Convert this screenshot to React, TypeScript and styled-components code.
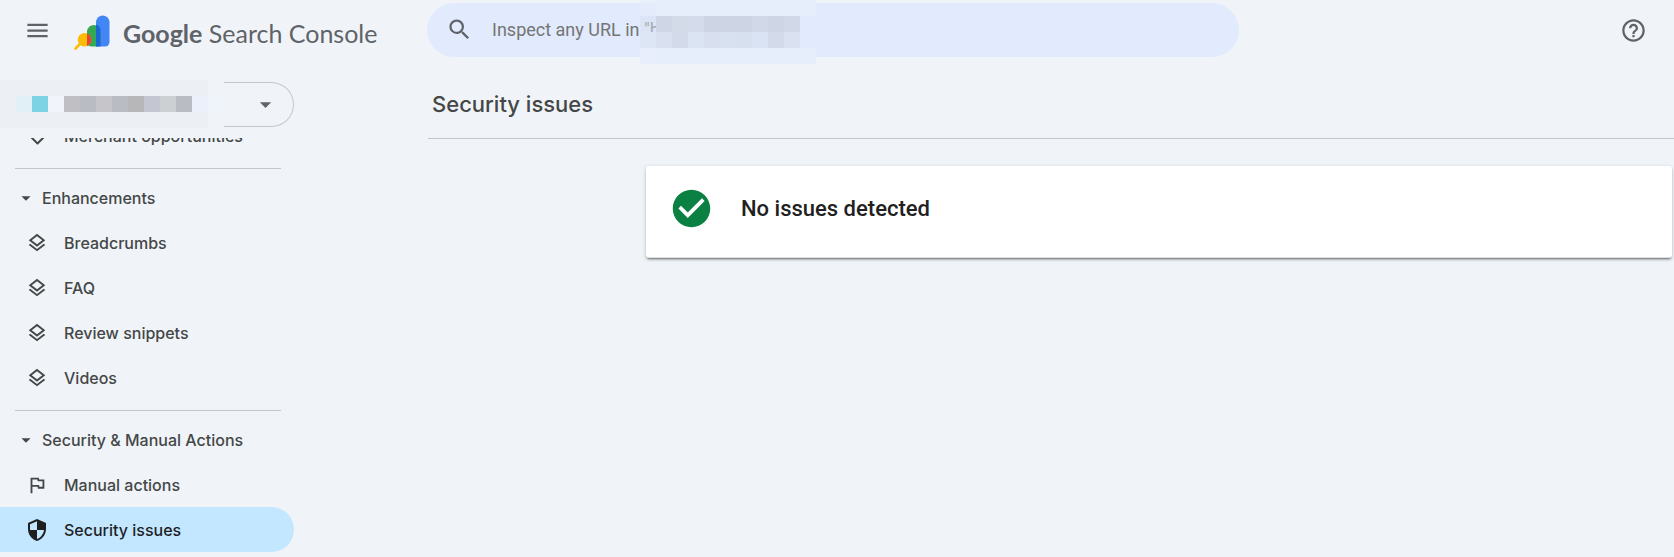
import React from "react";
import styled, { createGlobalStyle } from "styled-components";
import {
  MdArrowDropDown,
  MdCheckCircle,
  MdHelpOutline,
  MdMenu,
  MdOutlineFlag,
  MdOutlineLayers,
  MdSearch,
  MdSecurity,
} from "react-icons/md";

const GlobalStyle = createGlobalStyle`
  *, *::before, *::after { box-sizing: border-box; }
  body {
    margin: 0;
    background: #f0f4f9;
    color: #444746;
    font-family: Inter, "Liberation Sans", sans-serif;
  }
  svg { display: block; flex: none; }
`;

const Page = styled.div`
  display: flex;
  flex-direction: column;
  min-height: 100vh;
`;

const Header = styled.header`
  display: flex;
  align-items: center;
  height: 60px;
  padding: 0 27px 0 24px;
`;

const Brand = styled.div`
  display: flex;
  align-items: center;
  flex: none;
  width: 403px;
`;

const IconButton = styled.button`
  display: flex;
  padding: 0;
  border: 0;
  background: none;
  color: #5f6368;
  font-size: 27px;
  cursor: pointer;
`;

const HelpButton = styled(IconButton)`
  margin-left: auto;
`;

const BrandLink = styled.a`
  display: flex;
  align-items: center;
  gap: 13px;
  margin-left: 23px;
  padding-top: 4px;
  color: #5f6368;
  font-family: Lato, sans-serif;
  font-size: 25px;
  line-height: 36px;
  text-decoration: none;
  white-space: nowrap;
`;

const BrandName = styled.span`
  padding-top: 2px;
`;

const BrandStrong = styled.span`
  font-weight: 700;
`;

const SearchBox = styled.form`
  position: relative;
  display: flex;
  align-items: center;
  gap: 19px;
  flex: 0 1 812px;
  height: 54px;
  padding: 0 19px 2px;
  border-radius: 27px;
  background: #e1ebfd;
  color: #5f6368;
  font-size: 27px;
`;

const SearchInput = styled.input`
  flex: 1;
  min-width: 0;
  padding: 0;
  border: 0;
  outline: 0;
  background: none;
  font: 18px/27px Roboto, sans-serif;
  color: #444746;
  &::placeholder {
    color: #757575;
    opacity: 1;
  }
`;

const SearchMask = styled.div`
  position: absolute;
  top: -3px;
  left: 213px;
  width: 176px;
`;

const MaskRow = styled.div`
  display: flex;
  height: 16px;
`;

const MaskCell = styled.span<{ $color: string }>`
  flex: none;
  width: 16px;
  height: 16px;
  background: ${(p) => p.$color};
`;

const Body = styled.div`
  display: flex;
  flex: 1;
`;

const Sidebar = styled.aside`
  flex: none;
  width: 294px;
  padding-top: 22px;
`;

const PropertyButton = styled.button`
  position: relative;
  display: flex;
  align-items: center;
  justify-content: flex-end;
  width: 100%;
  height: 45px;
  padding: 0 14px;
  border: 1px solid #c4c7c5;
  border-left: 0;
  border-radius: 0 23px 23px 0;
  background: none;
  color: #5f6368;
  font-size: 27px;
  cursor: pointer;
`;

const PropertyMask = styled.span`
  position: absolute;
  top: -3px;
  left: 0;
  width: 224px;
  padding: 16px 0;
  background: linear-gradient(90deg, #eceff4 208px, #f0f4f9 208px);
`;

const NavViewport = styled.nav`
  margin-top: 11px;
  overflow: hidden;
`;

const NavScroll = styled.div`
  margin-top: -25px;
`;

const NavSection = styled.section`
  & + & {
    padding-top: 10px;
  }
  & + &::before {
    content: "";
    display: block;
    height: 1px;
    margin: 0 13px 6px 15px;
    background: #c4c7c5;
  }
`;

const NavHeading = styled.button`
  display: flex;
  align-items: center;
  gap: 5px;
  width: 100%;
  height: 45px;
  padding: 0 15px;
  border: 0;
  background: none;
  color: #444746;
  font: 500 16px/22px Inter, sans-serif;
  cursor: pointer;
  svg {
    font-size: 22px;
  }
`;

const NavLink = styled.a<{ $active?: boolean }>`
  display: flex;
  align-items: center;
  height: 45px;
  border-radius: 0 23px 23px 0;
  background: ${(p) => (p.$active ? "#c2e7ff" : "none")};
  color: ${(p) => (p.$active ? "#1f1f1f" : "#444746")};
  font-weight: 500;
  font-size: 16px;
  line-height: 22px;
  text-decoration: none;
`;

const NavIcon = styled.span<{ $size?: number }>`
  display: flex;
  justify-content: center;
  width: 64px;
  padding-right: 10px;
  padding-left: 20px;
  font-size: ${(p) => p.$size ?? 22}px;
`;

const Main = styled.main`
  flex: 1;
  min-width: 0;
  padding-left: 134px;
`;

const TitleBar = styled.div`
  padding: 32px 4px 21px;
  border-bottom: 1px solid #c4c7c5;
`;

const Title = styled.h1`
  margin: 0;
  font-weight: 500;
  font-size: 22px;
  line-height: 25px;
  color: #444746;
`;

const StatusCard = styled.section`
  display: flex;
  align-items: flex-start;
  gap: 27px;
  margin: 27px 2px 0 218px;
  padding: 20px 23px 26px;
  border-bottom: 1px solid #e0e0e0;
  border-radius: 3px;
  background: #fff;
  box-shadow: 0 2px 2px rgba(0, 0, 0, 0.2), 0 1px 5px rgba(0, 0, 0, 0.14),
    0 3px 1px -2px rgba(0, 0, 0, 0.24);
  svg {
    color: #0b8043;
    font-size: 45px;
  }
`;

const StatusText = styled.h2`
  margin: 0;
  color: #212121;
  font: 500 22px/45px Roboto, sans-serif;
`;

const searchMask = [
  ["rgba(230,237,251,.6)", ...Array(10).fill("#e6edfb")],
  ["rgba(216,224,238,.5)", "#cfd7e6", "#d3dae8", "#d4dceb", "#cdd5e4", "#cdd5e4", "#cdd5e4", "#d1d9e8", "#ced6e5", "#d1d9e8", "#e1ebfd"],
  ["#dde6f5", "#d9e1f0", "#d3dbea", "#dbe4f3", "#d8e0f0", "#d8e1f0", "#d7e0ef", "#dae3f3", "#d3dbea", "#dae2f1", "#e1ebfd"],
  ["#e8eefb", ...Array(10).fill("#e6edfb")],
];

const propertyMask = [
  "#eceff4", "#e0f0f6", "#7dd3e4", "#f1f5fb", "#bfbfc4", "#b9bcc2", "#c5c5ca",
  "#b9bcc2", "#b7b7b9", "#c4c7d1", "#ccd0d3", "#b9bcc2", "#ebf0fa", "#eef4f9",
];

function Logo() {
  return (
    <svg width="36" height="36" viewBox="0 0 36 36" aria-hidden="true">
      <path d="M22 7.500a6.800 6.800 0 0 1 13.500 0V28a4.500 4.500 0 0 1-4.500 4.500h-9z" fill="#4285f4" />
      <path d="M13 17a6.800 6.800 0 0 1 13.500 0v11a4.500 4.500 0 0 1-4.500 4.500H17.500a4.500 4.500 0 0 1-4.500-4.500z" fill="#34a853" />
      <path d="M22 10.600a6.800 6.800 0 0 1 4.500 6.400v15.500H22z" fill="#1967d2" />
      <path d="M7.500 28.500L1.500 34.500" stroke="#fbbc04" strokeWidth="2.600" strokeLinecap="round" />
      <circle cx="10.500" cy="25.700" r="6.800" fill="#fbbc04" />
      <path d="M13 19.400a6.800 6.800 0 0 1 0 12.600z" fill="#ea4335" />
    </svg>
  );
}

function TagIcon() {
  return (
    <svg width="22" height="22" viewBox="0 0 22 22" fill="none" stroke="currentColor" strokeWidth="2" aria-hidden="true">
      <path d="M4 4h7l7.500 7.500-7 7L4 11z" strokeLinejoin="round" />
      <circle cx="7.500" cy="7.500" r="1" />
    </svg>
  );
}

function NavItem({ icon, label, active, size }: { icon: React.ReactNode; label: string; active?: boolean; size?: number }) {
  return (
    <NavLink href="#" $active={active} aria-current={active ? "page" : undefined}>
      <NavIcon $size={size}>{icon}</NavIcon>
      {label}
    </NavLink>
  );
}

export default function App() {
  return (
    <Page>
      <GlobalStyle />
      <Header>
        <Brand>
          <IconButton aria-label="Main menu">
            <MdMenu />
          </IconButton>
          <BrandLink href="#">
            <Logo />
            <BrandName>
              <BrandStrong>Google</BrandStrong> Search Console
            </BrandName>
          </BrandLink>
        </Brand>
        <SearchBox role="search">
          <MdSearch />
          <SearchInput aria-label="Inspect URL" placeholder={'Inspect any URL in "h'} />
          <SearchMask aria-hidden="true">
            {searchMask.map((row, i) => (
              <MaskRow key={i}>
                {row.map((color, j) => (
                  <MaskCell key={j} $color={color} />
                ))}
              </MaskRow>
            ))}
          </SearchMask>
        </SearchBox>
        <HelpButton aria-label="Help">
          <MdHelpOutline />
        </HelpButton>
      </Header>
      <Body>
        <Sidebar>
          <PropertyButton aria-label="Select property">
            <PropertyMask aria-hidden="true">
              <MaskRow>
                {propertyMask.map((color, i) => (
                  <MaskCell key={i} $color={color} />
                ))}
              </MaskRow>
            </PropertyMask>
            <MdArrowDropDown />
          </PropertyButton>
          <NavViewport>
            <NavScroll>
              <NavSection>
                <NavItem icon={<TagIcon />} label="Merchant opportunities" />
              </NavSection>
              <NavSection>
                <NavHeading aria-expanded="true">
                  <MdArrowDropDown />
                  Enhancements
                </NavHeading>
                <NavItem icon={<MdOutlineLayers />} label="Breadcrumbs" />
                <NavItem icon={<MdOutlineLayers />} label="FAQ" />
                <NavItem icon={<MdOutlineLayers />} label="Review snippets" />
                <NavItem icon={<MdOutlineLayers />} label="Videos" />
              </NavSection>
              <NavSection>
                <NavHeading aria-expanded="true">
                  <MdArrowDropDown />
                  Security &amp; Manual Actions
                </NavHeading>
                <NavItem icon={<MdOutlineFlag />} label="Manual actions" />
                <NavItem icon={<MdSecurity />} label="Security issues" size={24} active />
              </NavSection>
            </NavScroll>
          </NavViewport>
        </Sidebar>
        <Main>
          <TitleBar>
            <Title>Security issues</Title>
          </TitleBar>
          <StatusCard>
            <MdCheckCircle />
            <StatusText>No issues detected</StatusText>
          </StatusCard>
        </Main>
      </Body>
    </Page>
  );
}
